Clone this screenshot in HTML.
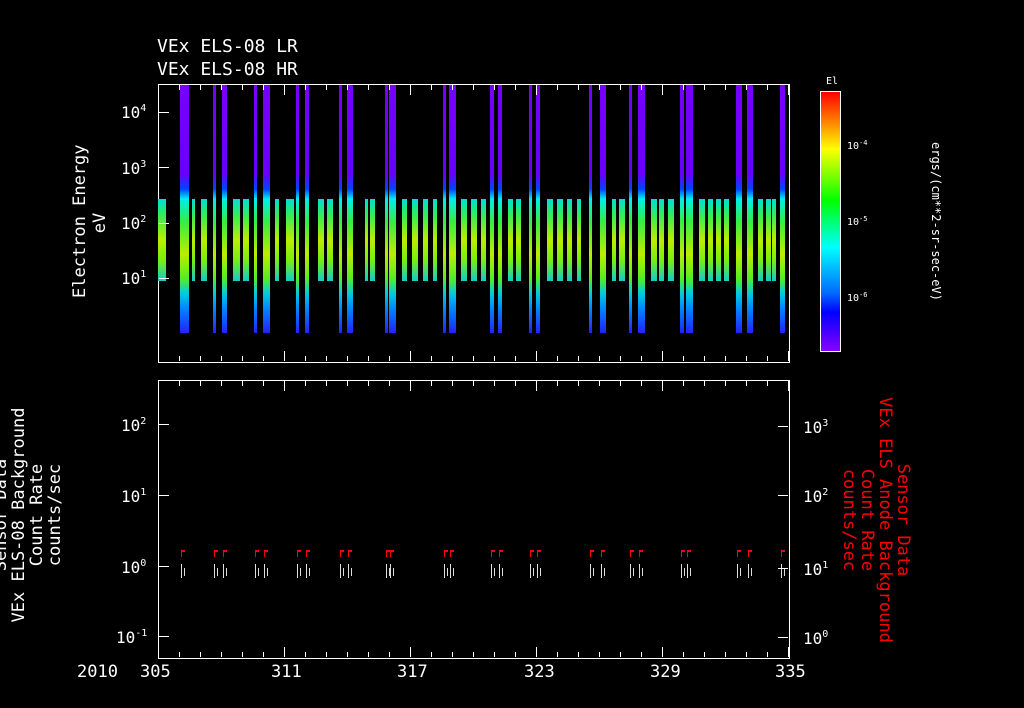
<!DOCTYPE html>
<html><head><meta charset="utf-8"><style>
body{margin:0;background:#000;width:1024px;height:708px;overflow:hidden;position:relative;font-family:"DejaVu Sans Mono","Liberation Mono",monospace;color:#fff}
.a{position:absolute}
.t{position:absolute;font-size:16px;white-space:nowrap;line-height:1}
.s{font-size:10px;vertical-align:7px}
.box{position:absolute;border:1px solid #fff}
.b{position:absolute}
.r{color:#f00}
</style></head><body>
<div class="t" style="left:157px;top:38px;font-size:18px">VEx ELS-08 LR</div>
<div class="t" style="left:157px;top:61px;font-size:18px">VEx ELS-08 HR</div>
<div class="box" style="left:158px;top:84px;width:630px;height:277px"></div>
<div class="box" style="left:158px;top:380px;width:630px;height:277px"></div>
<div id="bars"></div>
<div class="t" style="left:121px;top:104px">10<span class="s">4</span></div>
<div class="t" style="left:121px;top:160px">10<span class="s">3</span></div>
<div class="t" style="left:121px;top:215px">10<span class="s">2</span></div>
<div class="t" style="left:121px;top:270px">10<span class="s">1</span></div>
<div class="t" style="left:70px;top:298px;transform:rotate(-90deg);transform-origin:0 0;font-size:17px;line-height:20px;width:150px;text-align:center">Electron Energy<br>eV</div>
<div class="a" style="left:820px;top:91px;width:19px;height:259px;border:1px solid #fff;background:linear-gradient(to bottom,#f00 0%,#f80 12%,#ff0 22%,#0f0 42%,#0ff 60%,#06f 78%,#00f 85%,#80f 100%)"></div>
<div class="t" style="left:826px;top:77px;font-size:10px">El</div>
<div class="t" style="left:847px;top:140px;font-size:10px">10<span class="s" style="font-size:7px;vertical-align:4px">-4</span></div>
<div class="t" style="left:847px;top:216px;font-size:10px">10<span class="s" style="font-size:7px;vertical-align:4px">-5</span></div>
<div class="t" style="left:847px;top:292px;font-size:10px">10<span class="s" style="font-size:7px;vertical-align:4px">-6</span></div>
<div class="t" style="left:942px;top:142px;transform:rotate(90deg);transform-origin:0 0;font-size:12px">ergs/(cm**2-sr-sec-eV)</div>
<div class="t" style="left:121px;top:417px">10<span class="s">2</span></div>
<div class="t" style="left:121px;top:488px">10<span class="s">1</span></div>
<div class="t" style="left:121px;top:559px">10<span class="s">0</span></div>
<div class="t" style="left:116px;top:629px">10<span class="s">-1</span></div>
<div class="t" style="left:803px;top:419px">10<span class="s">3</span></div>
<div class="t" style="left:803px;top:488px">10<span class="s">2</span></div>
<div class="t" style="left:803px;top:561px">10<span class="s">1</span></div>
<div class="t" style="left:803px;top:630px">10<span class="s">0</span></div>
<div class="t" style="left:-8px;top:650px;transform:rotate(-90deg);transform-origin:0 0;font-size:17px;line-height:18px;text-align:center;width:270px">Sensor Data<br>VEx ELS-08 Background<br>Count Rate<br>counts/sec</div>
<div class="t r" style="left:912px;top:385px;transform:rotate(90deg);transform-origin:0 0;font-size:17px;line-height:18px;text-align:center;width:270px">Sensor Data<br>VEx ELS Anode Background<br>Count Rate<br>counts/sec</div>
<div class="t" style="left:77px;top:664px;font-size:17px">2010</div>
<div class="t" style="left:140px;top:664px;font-size:17px">305</div>
<div class="t" style="left:271px;top:664px;font-size:17px">311</div>
<div class="t" style="left:397px;top:664px;font-size:17px">317</div>
<div class="t" style="left:524px;top:664px;font-size:17px">323</div>
<div class="t" style="left:650px;top:664px;font-size:17px">329</div>
<div class="t" style="left:775px;top:664px;font-size:17px">335</div>
<script>
var h='';
var tall=[[180,9],[213,3],[222,5],[254,3],[263,7],[296,3],[305,4],[339,3],[347,6],[385,3],[389,7],[443,3],[449,7],[490,4],[498,4],[529,3],[536,4],[589,3],[600,6],[629,3],[638,7],[680,4],[686,7],[736,6],[747,6],[780,5]];
var sh=[[158,8],[192,3],[201,6],[233,7],[243,6],[275,4],[286,8],[318,6],[327,6],[365,3],[370,5],[402,5],[412,6],[423,5],[433,4],[461,6],[471,6],[481,5],[508,5],[516,5],[547,6],[557,6],[567,5],[577,4],[612,4],[619,6],[651,6],[659,5],[668,6],[699,6],[708,5],[716,5],[724,5],[758,5],[766,5],[772,4]];
sh.forEach(function(b){h+='<div class="b" style="left:'+b[0]+'px;top:199px;width:'+b[1]+'px;height:82px;background:linear-gradient(#0dd,#3e5 20%,#be0 50%,#7e1 75%,#1cc 100%)"></div>';});
tall.forEach(function(b){h+='<div class="b" style="left:'+b[0]+'px;top:85px;width:'+b[1]+'px;height:248px;background:linear-gradient(#70f,#60f 36%,#04f 42%,#0ee 46%,#3e4 55%,#be0 68%,#5e2 78%,#0cd 84%,#08f 90%,#22f 100%)"></div>';
h+='<div class="b" style="left:'+(b[0]+1)+'px;top:550px;width:3px;height:5px;border-top:2px solid #f00;border-left:1px solid #f00"></div>';
h+='<div class="b" style="left:'+(b[0]+1)+'px;top:564px;width:1px;height:14px;background:#ddd"></div><div class="b" style="left:'+(b[0]+4)+'px;top:568px;width:1px;height:8px;background:#ddd"></div>';});
[112,167,223,278].forEach(function(y){h+='<div class="b" style="left:159px;top:'+y+'px;width:10px;height:1px;background:#fff"></div>';});
for(var i=0;i<=30;i++){var x=158+i*21;var l=(i%6==0)?10:5;h+='<div class="b" style="left:'+x+'px;top:'+(361-l)+'px;width:1px;height:'+l+'px;background:#fff"></div><div class="b" style="left:'+x+'px;top:85px;width:1px;height:'+l+'px;background:#fff"></div><div class="b" style="left:'+x+'px;top:'+(657-l)+'px;width:1px;height:'+l+'px;background:#fff"></div><div class="b" style="left:'+x+'px;top:381px;width:1px;height:'+l+'px;background:#fff"></div>';}
[424,495,566,636].forEach(function(y){h+='<div class="b" style="left:159px;top:'+y+'px;width:10px;height:1px;background:#fff"></div>';});
[426,495,568,637].forEach(function(y){h+='<div class="b" style="left:778px;top:'+y+'px;width:10px;height:1px;background:#fff"></div>';});
document.getElementById('bars').innerHTML=h;
</script>
</body></html>
